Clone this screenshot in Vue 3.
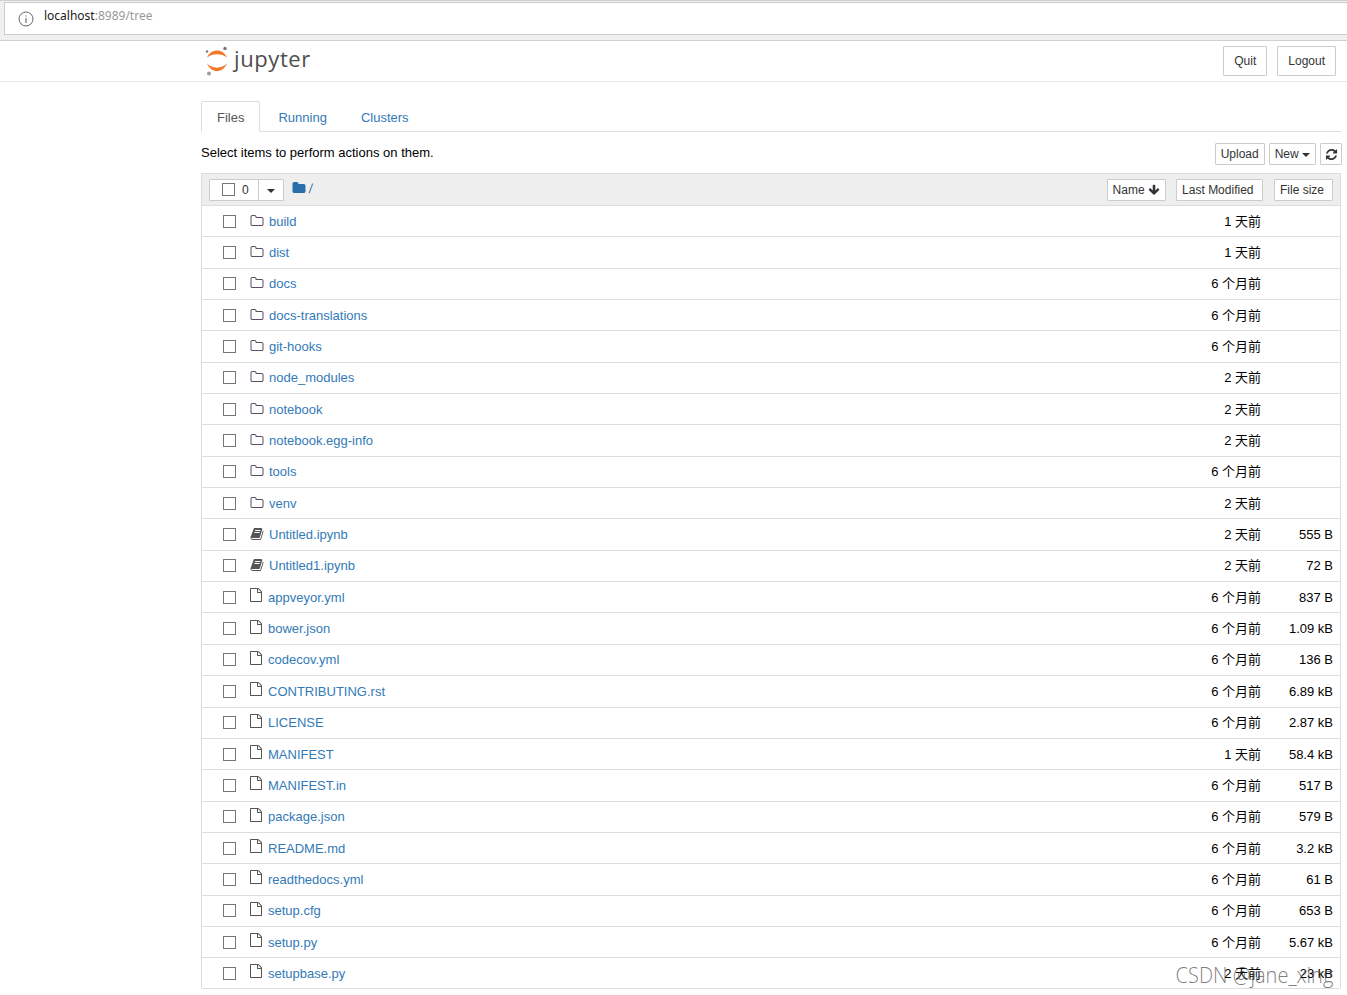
<script setup>
const rows = [
  { name: 'build', type: 'dir', time: '1 天前', size: '' },
  { name: 'dist', type: 'dir', time: '1 天前', size: '' },
  { name: 'docs', type: 'dir', time: '6 个月前', size: '' },
  { name: 'docs-translations', type: 'dir', time: '6 个月前', size: '' },
  { name: 'git-hooks', type: 'dir', time: '6 个月前', size: '' },
  { name: 'node_modules', type: 'dir', time: '2 天前', size: '' },
  { name: 'notebook', type: 'dir', time: '2 天前', size: '' },
  { name: 'notebook.egg-info', type: 'dir', time: '2 天前', size: '' },
  { name: 'tools', type: 'dir', time: '6 个月前', size: '' },
  { name: 'venv', type: 'dir', time: '2 天前', size: '' },
  { name: 'Untitled.ipynb', type: 'nb', time: '2 天前', size: '555 B' },
  { name: 'Untitled1.ipynb', type: 'nb', time: '2 天前', size: '72 B' },
  { name: 'appveyor.yml', type: 'file', time: '6 个月前', size: '837 B' },
  { name: 'bower.json', type: 'file', time: '6 个月前', size: '1.09 kB' },
  { name: 'codecov.yml', type: 'file', time: '6 个月前', size: '136 B' },
  { name: 'CONTRIBUTING.rst', type: 'file', time: '6 个月前', size: '6.89 kB' },
  { name: 'LICENSE', type: 'file', time: '6 个月前', size: '2.87 kB' },
  { name: 'MANIFEST', type: 'file', time: '1 天前', size: '58.4 kB' },
  { name: 'MANIFEST.in', type: 'file', time: '6 个月前', size: '517 B' },
  { name: 'package.json', type: 'file', time: '6 个月前', size: '579 B' },
  { name: 'README.md', type: 'file', time: '6 个月前', size: '3.2 kB' },
  { name: 'readthedocs.yml', type: 'file', time: '6 个月前', size: '61 B' },
  { name: 'setup.cfg', type: 'file', time: '6 个月前', size: '653 B' },
  { name: 'setup.py', type: 'file', time: '6 个月前', size: '5.67 kB' },
  { name: 'setupbase.py', type: 'file', time: '2 天前', size: '23 kB' },
];
</script>

<template>
  <div class="page">
    <div class="browser">
      <div class="address">
        <svg class="info" width="16" height="16" viewBox="0 0 16 16">
          <circle cx="8" cy="8" r="7" fill="none" stroke="#666" stroke-width="1" />
          <rect x="7.5" y="7" width="1" height="5" fill="#555" />
          <rect x="7.5" y="4.5" width="1" height="1" fill="#555" />
        </svg>
        <span class="host">localhost</span><span class="port">:8989/tree</span>
      </div>
    </div>

    <header class="header">
      <div class="logo">
        <svg width="26" height="30" viewBox="0 0 26 30">
          <path d="M3 11.500C7 2 19 2 23 11.500C18 7 8 7 3 11.500Z" fill="#f37726" />
          <path d="M3 17.500C7 27.500 19 27.500 23 17.500C18 23 8 23 3 17.500Z" fill="#f37726" />
          <circle cx="21" cy="2.500" r="1.700" fill="#767677" />
          <circle cx="3" cy="5.500" r="1.200" fill="#767677" />
          <circle cx="5" cy="27.500" r="2" fill="#9e9e9e" />
        </svg>
        <span class="logo-text">jupyter</span>
      </div>
      <div class="header-actions">
        <button type="button" class="btn big">Quit</button>
        <button type="button" class="btn big">Logout</button>
      </div>
    </header>

    <main class="main">
      <nav class="tabs">
        <a class="tab active">Files</a>
        <a class="tab">Running</a>
        <a class="tab">Clusters</a>
      </nav>

      <div class="toolbar">
        <span class="hint">Select items to perform actions on them.</span>
        <div class="toolbar-actions">
          <button type="button" class="btn">Upload</button>
          <button type="button" class="btn">New <i class="caret"></i></button>
          <button type="button" class="btn refresh">
            <svg width="13" height="13" viewBox="0 0 1792 1792">
              <path d="M1639 1056q0 5-1 7-64 268-268 434.5t-478 166.500q-146 0-282.500-55t-243.500-157l-129 129q-19 19-45 19t-45-19-19-45v-448q0-26 19-45t45-19h448q26 0 45 19t19 45-19 45l-137 137q71 66 161 102t187 36q134 0 250-65t186-179q11-17 53-117 8-23 30-23h192q13 0 22.500 9.500t9.500 22.500zm25-800v448q0 26-19 45t-45 19h-448q-26 0-45-19t-19-45 19-45l138-138q-148-137-349-137-134 0-250 65t-186 179q-11 17-53 117-8 23-30 23h-199q-13 0-22.500-9.500t-9.500-22.500v-7q65-268 270-434.500t480-166.500q146 0 284 55.500t245 156.500l130-129q19-19 45-19t45 19 19 45z" fill="#333" />
            </svg>
          </button>
        </div>
      </div>

      <section class="list">
        <div class="list-head">
          <div class="select-group">
            <span class="select-main"><i class="check head-check"></i><span>0</span></span>
            <span class="select-drop"><i class="caret"></i></span>
          </div>
          <svg class="crumb-folder" width="14" height="14" viewBox="0 0 1792 1792">
            <path d="M1728 608v704q0 92-66 158t-158 66h-1216q-92 0-158-66t-66-158v-960q0-92 66-158t158-66h320q92 0 158 66t66 158v32h672q92 0 158 66t66 158z" fill="#296eaa" />
          </svg>
          <span class="crumb-slash">/</span>
          <div class="sorters">
            <button type="button" class="btn sort">
              Name
              <svg width="12" height="12" viewBox="0 0 1792 1792">
                <path d="M1675 832q0 53-37 90l-651 652q-39 37-91 37-53 0-90-37l-651-652q-38-36-38-90 0-53 38-91l74-75q39-37 91-37 53 0 90 37l294 294v-704q0-52 38-90t90-38h128q52 0 90 38t38 90v704l294-294q37-37 90-37 52 0 91 37l75 75q37 39 37 91z" fill="#333" />
              </svg>
            </button>
            <button type="button" class="btn sort last-mod">Last Modified</button>
            <button type="button" class="btn sort file-size">File size</button>
          </div>
        </div>

        <div v-for="row in rows" :key="row.name" class="row">
          <i class="check"></i>
          <svg v-if="row.type === 'dir'" class="icon" width="14" height="14" viewBox="0 0 1792 1792">
            <path d="M1600 1312v-704q0-40-28-68t-68-28h-704q-40 0-68-28t-28-68v-64q0-40-28-68t-68-28h-320q-40 0-68 28t-28 68v960q0 40 28 68t68 28h1216q40 0 68-28t28-68zm128-704v704q0 92-66 158t-158 66h-1216q-92 0-158-66t-66-158v-960q0-92 66-158t158-66h320q92 0 158 66t66 158v32h672q92 0 158 66t66 158z" fill="#5a4f66" />
          </svg>
          <svg v-else-if="row.type === 'nb'" class="icon" width="14" height="14" viewBox="0 0 1792 1792">
            <path d="M1703 478q40 57 18 129l-275 906q-19 64-76.500 107.500t-122.500 43.500h-923q-77 0-148.500-53.500t-99.500-131.500q-24-67-2-127 0-4 3-27t4-37q1-8-3-21.500t-3-19.500q2-11 8-21t16.500-23.500 16.500-23.500q23-38 45-91.500t30-91.500q3-10 .5-30t-.5-28q3-11 17-28t17-23q21-36 42-92t25-90q1-9-2.500-32t.5-28q4-13 22-30.500t22-22.500q19-26 42.500-84.500t27.500-96.500q1-8-3-25.500t-2-26.500q2-8 9-18t18-23 17-21q8-12 16.500-30.500t15-35 16-36 19.500-32 26.500-23.500 36-11.500 47.500 5.500l-1 3q38-9 51-9h761q74 0 114 56t18 130l-274 906q-36 119-71.500 153.500t-128.500 34.500h-869q-27 0-38 15-11 16-1 43 24 70 144 70h923q29 0 56-15.500t35-41.500l300-987q7-22 5-57 38 15 59 43zm-1064 2q-4 13 2 22.500t20 9.500h608q13 0 25.500-9.500t16.500-22.500l21-64q4-13-2-22.500t-20-9.500h-608q-13 0-25.500 9.500t-16.500 22.500zm-83 256q-4 13 2 22.500t20 9.500h608q13 0 25.500-9.500t16.500-22.500l21-64q4-13-2-22.500t-20-9.500h-608q-13 0-25.500 9.500t-16.500 22.500z" fill="#555" />
          </svg>
          <svg v-else class="icon doc" width="14" height="14" viewBox="0 0 1792 1792">
            <path d="M1596 380q28 28 48 76t20 88v1152q0 40-28 68t-68 28h-1344q-40 0-68-28t-28-68v-1600q0-40 28-68t68-28h896q40 0 88 20t76 48zm-444-244v376h376q-10-29-22-41l-313-313q-12-12-41-22zm384 1528v-1024h-416q-40 0-68-28t-28-68v-416h-768v1536h1280z" fill="#555" />
          </svg>
          <a class="name">{{ row.name }}</a>
          <span class="time">{{ row.time }}</span>
          <span class="size">{{ row.size }}</span>
        </div>
      </section>
    </main>

    <div class="watermark">CSDN @jane_xing</div>
  </div>
</template>

<style>
body {
  background: #fff;
}
</style>

<style scoped>
.page {
  position: relative;
  width: 1347px;
  height: 995px;
  overflow: hidden;
  background: #fff;
  color: #000;
  font-family: "Liberation Sans", "Noto Sans CJK SC", sans-serif;
  font-size: 13px;
}

.browser {
  box-sizing: border-box;
  height: 41px;
  padding: 1px 0 5px 4px;
  border-top: 1px solid #d0d0d0;
  border-bottom: 1px solid #cfcfcf;
  background: #f0f0f0;
}

.address {
  display: flex;
  align-items: center;
  box-sizing: border-box;
  height: 33px;
  padding: 0 0 6px 13px;
  border: 1px solid #cdcdcd;
  border-right: 0;
  background: #fff;
  font-family: "Noto Sans", sans-serif;
  font-size: 12px;
}

.info {
  margin: 7px 10px 0 0;
}

.host {
  color: #1a1a1a;
}

.port {
  color: #999;
}

.header {
  display: flex;
  align-items: center;
  justify-content: space-between;
  box-sizing: border-box;
  height: 41px;
  padding: 0 11px 1px 204px;
  border-bottom: 1px solid #e7e7e7;
}

.logo {
  display: flex;
  align-items: center;
  gap: 4px;
}

.logo-text {
  margin-top: -6px;
  color: #4e4e4e;
  font-family: "Open Sans", sans-serif;
  font-size: 22px;
  letter-spacing: .6px;
}

.header-actions {
  display: flex;
  gap: 10px;
}

.btn {
  box-sizing: border-box;
  height: 22px;
  padding: 0 5px;
  border: 1px solid #ccc;
  border-radius: 1px;
  background: #fff;
  color: #333;
  font: inherit;
  font-size: 12px;
}

.btn.big {
  height: 30px;
  padding: 0 10px;
}

.main {
  box-sizing: border-box;
  width: 1140px;
  margin-left: 201px;
  padding-top: 19px;
}

.tabs {
  display: flex;
  height: 31px;
  border-bottom: 1px solid #ddd;
  box-sizing: border-box;
  line-height: 31px;
  font-size: 13px;
}

.tab {
  box-sizing: border-box;
  height: 31px;
  padding: 0 15px;
  margin-right: 2px;
  border: 1px solid transparent;
  border-radius: 2px 2px 0 0;
  color: #337ab7;
}

.tab.active {
  border-color: #ddd;
  border-bottom-color: #fff;
  color: #555;
  background: #fff;
}

.toolbar {
  display: flex;
  align-items: center;
  justify-content: space-between;
  height: 42px;
  font-size: 13px;
  margin-right: -1px;
  box-sizing: border-box;
}

.hint {
  margin-bottom: 2px;
}

.toolbar-actions {
  display: flex;
  gap: 4px;
  margin-top: 2px;
}

.caret {
  display: inline-block;
  width: 0;
  height: 0;
  vertical-align: middle;
  border-top: 4px solid #333;
  border-right: 4px solid transparent;
  border-left: 4px solid transparent;
}

.refresh {
  display: flex;
  align-items: center;
  padding: 0 3.500px;
}

.list {
  border: 1px solid #ddd;
  border-top: 0;
  border-radius: 0 0 2px 2px;
}

.list-head {
  display: flex;
  align-items: center;
  box-sizing: border-box;
  height: 33px;
  padding: 0 7px;
  border-top: 1px solid #ddd;
  border-bottom: 1px solid #ddd;
  background: #eee;
  margin-top: -1px;
}

.select-group {
  display: flex;
  box-sizing: border-box;
  height: 22px;
  border: 1px solid #ccc;
  border-radius: 1px;
  background: #fff;
  color: #333;
  font-size: 12px;
}

.select-main {
  display: flex;
  align-items: center;
  gap: 7px;
  width: 49px;
  padding-left: 12px;
  box-sizing: border-box;
  border-right: 1px solid #ccc;
}

.select-drop {
  display: flex;
  align-items: center;
  justify-content: center;
  width: 24px;
  padding-top: 2px;
}

.check {
  display: block;
  flex: none;
  box-sizing: border-box;
  width: 13px;
  height: 13px;
  border: 1px solid #767676;
  background: #fff;
}

.head-check {
  width: 13px;
  height: 13px;
}

.crumb-folder {
  margin: -3px 0 0 8px;
}

.crumb-slash {
  margin: -3px 0 0 3px;
  color: #3f6f9f;
  font-size: 13px;
  transform: skewX(-6deg);
}

.sorters {
  display: flex;
  gap: 10.500px;
  margin-left: auto;
}

.sort {
  display: flex;
  align-items: center;
  gap: 3px;
  padding: 0 5px;
}

.sort.last-mod {
  padding-right: 9px;
}

.sort.file-size {
  padding-right: 8px;
}

.row {
  display: flex;
  align-items: center;
  box-sizing: border-box;
  height: 31.350px;
  padding: 0 7px 0 21px;
  border-bottom: 1px solid #ddd;
  line-height: 1;
}

.row:last-child {
  height: 30px;
  border-bottom: 0;
}

.icon {
  flex: none;
  margin: -1px 5px 0 14px;
}

.icon.doc {
  margin: -4px 5px 0 13px;
}

.name {
  color: #337ab7;
  font-size: 13px;
}

.time {
  margin-left: auto;
  color: #000;
}

.size {
  box-sizing: border-box;
  width: 72px;
  color: #000;
  text-align: right;
}

.watermark {
  position: absolute;
  right: 14px;
  top: 959px;
  color: rgba(70, 70, 70, .7);
  font-family: "Open Sans", sans-serif;
  font-weight: 300;
  font-size: 22px;
  white-space: nowrap;
  transform: scaleX(.91);
  transform-origin: right center;
}
</style>
